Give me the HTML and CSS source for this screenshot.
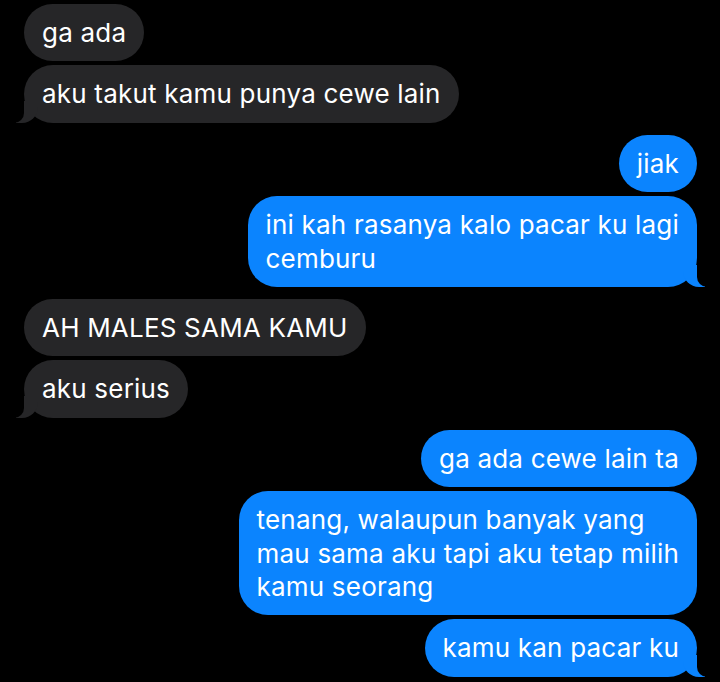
FILE: index.html
```html
<!DOCTYPE html>
<html lang="id">
<head>
    <meta charset="UTF-8">
    <meta name="viewport" content="width=device-width, initial-scale=1.0">
    <title>Pesan</title>
    <link rel="stylesheet" href="styles.css">
</head>
<body>
    <div class="chat">
        <div class="group them">
            <div class="bubble">ga ada</div>
            <div class="bubble tail">aku takut kamu punya cewe lain</div>
        </div>

        <div class="group me">
            <div class="bubble">jiak</div>
            <div class="bubble tail">ini kah rasanya kalo pacar ku lagi<br>cemburu</div>
        </div>

        <div class="group them">
            <div class="bubble">AH MALES SAMA KAMU</div>
            <div class="bubble tail">aku serius</div>
        </div>

        <div class="group me">
            <div class="bubble">ga ada cewe lain ta</div>
            <div class="bubble">tenang, walaupun banyak yang<br>mau sama aku tapi aku tetap milih<br>kamu seorang</div>
            <div class="bubble tail">kamu kan pacar ku</div>
        </div>
    </div>
</body>
</html>
```

FILE: styles.css
```css
body {
    margin: 0;
    padding: 0;
    background: #000;
    color: #fff;
    font-family: 'Inter', 'Roboto', sans-serif;
    overflow: hidden;
}

.chat {
    display: flex;
    flex-direction: column;
    gap: 12px;
    padding: 4px 23px 0 24px;
}

.group {
    display: flex;
    flex-direction: column;
    gap: 4px;
}

.group.them {
    align-items: flex-start;
}

.group.me {
    align-items: flex-end;
}

.bubble {
    position: relative;
    font-size: 26px;
    line-height: 33.4px;
    letter-spacing: 0.2px;
    padding: 12px 18px 12px 18px;
    border-radius: 29px;
    white-space: nowrap;
}

.them .bubble {
    background: #262628;
}

.me .bubble {
    background: #0b84fe;
}

/* tails */
.bubble.tail::before,
.bubble.tail::after {
    content: "";
    position: absolute;
    bottom: 0;
    height: 22px;
}

.them .tail::before {
    left: -8px;
    width: 22px;
    background: #262628;
    border-bottom-right-radius: 16px;
}

.them .tail::after {
    left: -12px;
    width: 12px;
    background: #000;
    border-bottom-right-radius: 10px;
}

.me .tail::before {
    right: -8px;
    width: 22px;
    background: #0b84fe;
    border-bottom-left-radius: 16px;
}

.me .tail::after {
    right: -12px;
    width: 12px;
    background: #000;
    border-bottom-left-radius: 10px;
}
```
